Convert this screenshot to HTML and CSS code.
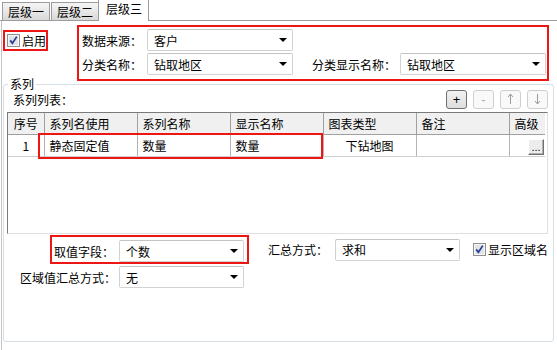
FILE: index.html
```html
<!DOCTYPE html>
<html lang="zh-CN">
<head>
  <meta charset="UTF-8" />
  <meta name="viewport" content="width=device-width, initial-scale=1.0" />
  <title>层级三</title>
  <link rel="stylesheet" href="styles.css">
</head>
<body>
  <div class="tabs">
    <div class="tab">层级一</div>
    <div class="tab">层级二</div>
    <div class="tab active">层级三</div>
  </div>

  <div class="page">
    <div class="top">
      <label class="enable hl">
        <svg class="check" width="13" height="13" viewBox="0 0 13 13"><rect x="0.5" y="0.5" width="12" height="12" fill="#f6f6f6" stroke="#8e8f8f"/><rect x="2" y="2" width="9" height="9" fill="#dfe3ea"/><path d="M3.2 6.4 L5.4 9.2 L9.8 2.6" fill="none" stroke="#2a3d8f" stroke-width="1.7"/></svg>
        <span>启用</span>
      </label>
      <div class="source hl">
        <div class="row">
          <span class="lbl">数据来源：</span>
          <div class="select">客户</div>
        </div>
        <div class="row">
          <span class="lbl">分类名称：</span>
          <div class="select">钻取地区</div>
          <span class="lbl lbl-wide">分类显示名称：</span>
          <div class="select">钻取地区</div>
        </div>
      </div>
    </div>

    <fieldset class="series">
      <legend>系列</legend>
      <div class="list-head">
        <span class="list-title">系列列表：</span>
        <div class="tools">
          <button class="tool on">+</button>
          <button class="tool">-</button>
          <button class="tool"><svg width="7" height="12" viewBox="0 0 7 12"><path d="M3.5 1 V11 M1 4 L3.5 1 L6 4" fill="none" stroke="#9a9a9a"/></svg></button>
          <button class="tool"><svg width="7" height="12" viewBox="0 0 7 12"><path d="M3.5 1 V11 M1 8 L3.5 11 L6 8" fill="none" stroke="#9a9a9a"/></svg></button>
        </div>
      </div>

      <div class="grid">
        <table>
          <colgroup>
            <col class="c-no"><col class="c-mid"><col class="c-mid"><col class="c-mid"><col class="c-mid"><col class="c-mid"><col class="c-adv">
          </colgroup>
          <thead>
            <tr>
              <th class="center">序号</th>
              <th>系列名使用</th>
              <th>系列名称</th>
              <th>显示名称</th>
              <th>图表类型</th>
              <th>备注</th>
              <th>高级</th>
            </tr>
          </thead>
          <tbody>
            <tr>
              <td class="center">1</td>
              <td>静态固定值</td>
              <td>数量</td>
              <td>数量</td>
              <td class="center">下钻地图</td>
              <td></td>
              <td class="adv"><button class="more">...</button></td>
            </tr>
          </tbody>
        </table>
        <div class="mark"></div>
      </div>

      <div class="opts">
        <div class="opt-row">
          <div class="field hl">
            <span class="lbl lbl-val">取值字段：</span>
            <div class="select select-sm">个数</div>
          </div>
          <span class="lbl lbl-sum">汇总方式：</span>
          <div class="select select-sm">求和</div>
          <label class="show-name">
            <svg width="13" height="13" viewBox="0 0 13 13"><rect x="0.5" y="0.5" width="12" height="12" fill="#f6f6f6" stroke="#8e8f8f"/><rect x="2" y="2" width="9" height="9" fill="#dfe3ea"/><path d="M3.2 6.4 L5.4 9.2 L9.8 2.6" fill="none" stroke="#2a3d8f" stroke-width="1.7"/></svg>
            <span>显示区域名</span>
          </label>
        </div>
        <div class="opt-row row-two">
          <span class="lbl lbl-area">区域值汇总方式：</span>
          <div class="select select-sm">无</div>
        </div>
      </div>
    </fieldset>
  </div>
</body>
</html>
```
FILE: styles.css
```css
html, body {
  margin: 0;
  background-color: #fff;
  height: 100%;
  overflow: hidden;
}

body {
  font-family: "Noto Sans CJK SC", "Liberation Sans", sans-serif;
  font-size: 12px;
  color: #000;
  -webkit-user-select: none;
  user-select: none;
}

/* tab strip */
.tabs {
  display: flex;
  align-items: flex-end;
  height: 20px;
  padding-left: 2px;
  border-bottom: 1px solid #9c9c9c;
}

.tab {
  height: 17px;
  line-height: 17px;
  padding: 0 5px;
  border: 1px solid #9c9c9c;
  border-bottom: none;
  background: linear-gradient(#f5f5f5, #d9d9d9);
  margin-right: 1px;
  white-space: nowrap;
}

.tab.active {
  height: 21px;
  line-height: 18px;
  padding: 0 6px 0 7px;
  margin-left: -2px;
  margin-bottom: -1px;
  background: #fff;
  position: relative;
}

/* page body */
.page {
  margin-left: 1px;
  height: 329px;
  border-left: 1px solid #c4c4c4;
}

.hl {
  box-sizing: border-box;
  border: 2px solid #ee1515;
}

.top {
  display: flex;
  align-items: flex-start;
  padding: 4px 0 0 1px;
}

.enable {
  display: flex;
  align-items: center;
  gap: 2px;
  width: 45px;
  height: 21px;
  margin-top: 5px;
  padding-left: 2px;
  white-space: nowrap;
  flex: none;
}

.enable svg, .show-name svg {
  flex: none;
}

.source {
  width: 472px;
  height: 56px;
  margin-left: 29px;
  padding: 2px 0 0 3px;
  display: flex;
  flex-direction: column;
  gap: 2px;
}

.row {
  display: flex;
  align-items: center;
}

.lbl {
  width: 65px;
  flex: none;
  white-space: nowrap;
}

.lbl-wide {
  width: 88px;
  margin-left: 19px;
}

.select {
  box-sizing: border-box;
  width: 146px;
  height: 22px;
  flex: none;
  display: flex;
  align-items: center;
  padding: 0 5px 0 6px;
  border: 1px solid #d2d2d2;
  border-top-color: #c4c4c4;
  border-radius: 2px;
  background: #fff;
}

.select::after {
  content: "";
  margin-left: auto;
  border-left: 4px solid transparent;
  border-right: 4px solid transparent;
  border-top: 4px solid #000;
}

.select-sm {
  width: 125px;
}

/* series group */
.series {
  margin: -3px 5px 0 1px;
  height: 264px;
  box-sizing: border-box;
  padding: 0 5px 0 3px;
  border: 1px solid #d5dfe5;
  border-radius: 3px;
}

.series legend {
  margin-left: 1px;
  padding: 0 2px;
  line-height: 12px;
}

.list-head {
  display: flex;
  justify-content: space-between;
  align-items: center;
  height: 20px;
  margin-top: -1px;
}

.list-title {
  padding-left: 6px;
}

.tools {
  display: flex;
  gap: 6px;
}

.tool {
  width: 21px;
  height: 19px;
  padding: 0;
  display: flex;
  align-items: center;
  justify-content: center;
  font-family: "Liberation Sans", sans-serif;
  font-size: 13px;
  color: #a8a8a8;
  border: 1px solid #cfcfcf;
  border-radius: 3px;
  background: #f9f9f9;
}

.tool.on {
  color: #000;
  border-color: #707070;
  background: linear-gradient(#f2f2f2, #dedede);
}

.grid {
  position: relative;
  height: 122px;
  box-sizing: border-box;
  margin-top: 3px;
  border: 1px solid #e0e0e0;
  border-top-color: #7a7a7a;
  border-left: 1px solid #7a7a7a;
  background: #fff;
}

.grid table {
  border-collapse: collapse;
  table-layout: fixed;
  width: 537px;
}

.c-no { width: 36px; }
.c-mid { width: 93px; }
.c-adv { width: 36px; }

.grid th, .grid td {
  height: 21px;
  padding: 0 5px;
  text-align: left;
  font-weight: normal;
  white-space: nowrap;
  overflow: hidden;
}

.grid th {
  background: #f0f0f0;
  border-right: 1px solid #a0a0a0;
  border-bottom: 1px solid #a0a0a0;
}

.grid td {
  border-right: 1px solid #b4b4b4;
  border-bottom: 1px solid #cfcfcf;
}

.grid th:last-child, .grid td:last-child {
  border-right: none;
}

.grid .center {
  text-align: center;
}

.grid td.adv {
  padding: 0 1px 0 0;
  text-align: right;
}

.more {
  width: 16px;
  height: 16px;
  padding: 0;
  vertical-align: middle;
  font-family: "Liberation Sans", sans-serif;
  font-size: 11px;
  line-height: 10px;
  border: 1px solid;
  border-color: #fff #6f6f6f #6f6f6f #fff;
  background: #ececec;
  box-shadow: inset -1px -1px 0 #b0b0b0;
}

.mark {
  position: absolute;
  left: 30px;
  top: 20px;
  width: 285px;
  height: 26px;
  box-sizing: border-box;
  border: 2px solid #ee1515;
}

/* bottom options */
.opts {
  margin-top: 1px;
}

.opt-row {
  display: flex;
  align-items: center;
}

.field {
  display: flex;
  align-items: center;
  flex: none;
  width: 199px;
  height: 29px;
  margin-left: 43px;
  padding: 3px 0 0 2px;
}

.lbl-val {
  width: 65px;
}

.lbl-sum {
  width: 67px;
  margin-left: 19px;
}

.show-name {
  display: flex;
  align-items: center;
  gap: 2px;
  margin-left: 13px;
  flex: none;
  white-space: nowrap;
}

.row-two {
  margin-top: 2px;
}

.lbl-area {
  width: 99px;
  padding-left: 13px;
}
```
